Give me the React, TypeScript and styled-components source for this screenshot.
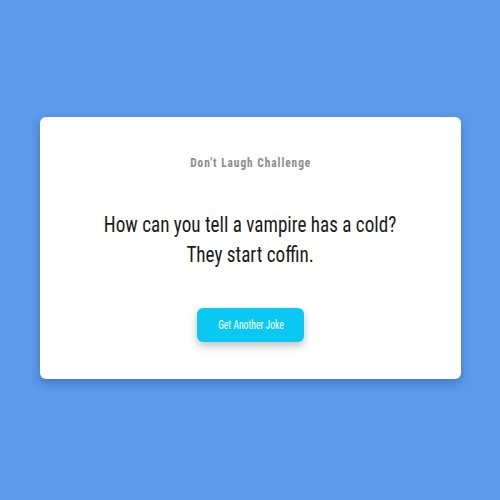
import React from "react";
import styled, { createGlobalStyle } from "styled-components";

const Global = createGlobalStyle`
  html, body { margin: 0; padding: 0; }
  body {
    background: #5c9aec;
    font-family: Roboto, "Liberation Sans", sans-serif;
    height: 500px;
    overflow: hidden;
  }
`;

const Page = styled.main`
  box-sizing: border-box;
  height: 500px;
  padding-top: 117px;
  display: flex;
  justify-content: center;
  align-items: flex-start;
`;

const Card = styled.section`
  box-sizing: border-box;
  width: 421px;
  height: 262px;
  margin-left: 1px;
  background: #ffffff;
  border-radius: 6px;
  box-shadow: 0 4px 10px rgba(20, 50, 110, 0.35);
  padding-top: 38px;
  display: flex;
  flex-direction: column;
  align-items: center;
`;

const Title = styled.h2`
  margin: 0;
  font-size: 12px;
  line-height: 16px;
  font-weight: 700;
  letter-spacing: 1px;
  color: #8c8c8c;
  font-stretch: 75%;
  transform: scaleX(0.95);
`;

const Joke = styled.p`
  margin: 39px 0 0;
  font-size: 22px;
  line-height: 30px;
  font-weight: 400;
  color: #1a1a1a;
  text-align: center;
  font-stretch: 75%;
  transform: scaleX(0.87);
  white-space: nowrap;
`;

const Button = styled.button`
  margin-top: 38px;
  width: 107px;
  height: 34px;
  border: none;
  border-radius: 6px;
  background: #0bc8f2;
  color: #ffffff;
  font-family: Roboto, "Liberation Sans", sans-serif;
  font-size: 12px;
  font-weight: 400;
  font-stretch: 75%;
  box-shadow: 0 4px 8px rgba(0, 0, 0, 0.25);
  cursor: pointer;
  display: flex;
  align-items: center;
  justify-content: center;
  padding: 0;
`;

const Label = styled.span`
  display: inline-block;
  transform: scaleX(0.8);
  white-space: nowrap;
`;

export default function App() {
  return (
    <>
      <Global />
      <Page>
        <Card>
          <Title>Don't Laugh Challenge</Title>
          <Joke>
            How can you tell a vampire has a cold?
            <br />
            They start coffin.
          </Joke>
          <Button>
            <Label>Get Another Joke</Label>
          </Button>
        </Card>
      </Page>
    </>
  );
}
